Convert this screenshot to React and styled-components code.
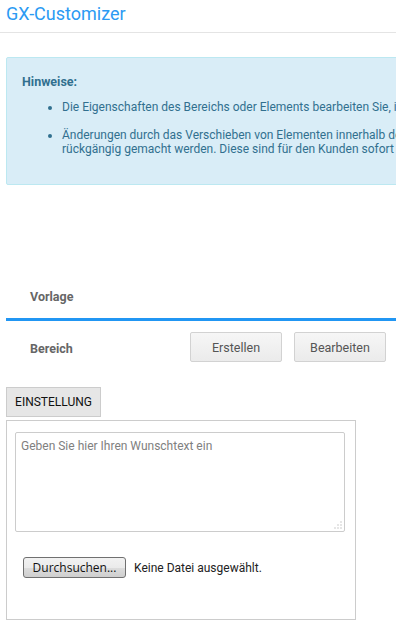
import React from 'react';
import styled, { createGlobalStyle } from 'styled-components';

const GlobalStyle = createGlobalStyle`
  html, body {
    margin: 0;
    padding: 0;
    background: #ffffff;
    overflow-x: hidden;
    font-family: Roboto, "Liberation Sans", Arial, sans-serif;
  }
`;

const hints = [
  ['Die Eigenschaften des Bereichs oder Elements bearbeiten Sie, indem Sie auf das jeweilige Stift-Symbol klicken.'],
  [
    'Änderungen durch das Verschieben von Elementen innerhalb des Customizers können nicht mehr',
    'rückgängig gemacht werden. Diese sind für den Kunden sofort sichtbar.',
  ],
];

const Grip = () => (
  <GripIcon width="8" height="8" viewBox="0 0 8 8">
    {[[7, 1], [7, 4], [7, 7], [4, 4], [4, 7], [1, 7]].map(([x, y], i) => (
      <rect key={i} x={x - 0.5} y={y - 0.5} width="1" height="1" fill="#9a9a9a" />
    ))}
  </GripIcon>
);

const App = () => {
  return (
    <>
      <GlobalStyle />
      <Page>
        <Header>
          <Title>GX-Customizer</Title>
        </Header>
        <Content>
          <InfoBox>
            <InfoTitle>Hinweise:</InfoTitle>
            <HintList>
              {hints.map((lines, i) => (
                <HintItem key={i}>
                  {lines.map((line, j) => (
                    <React.Fragment key={j}>
                      {j > 0 && <br />}
                      {line}
                    </React.Fragment>
                  ))}
                </HintItem>
              ))}
            </HintList>
          </InfoBox>

          <SettingsTable>
            <Row $height={43}>
              <Label>Vorlage</Label>
            </Row>
            <ActiveLine />
            <Row $height={54}>
              <Label>Bereich</Label>
              <ButtonGroup>
                <GrayButton>Erstellen</GrayButton>
                <GrayButton>Bearbeiten</GrayButton>
              </ButtonGroup>
            </Row>
          </SettingsTable>

          <TabBar>
            <Tab>EINSTELLUNG</Tab>
          </TabBar>
          <Panel>
            <TextWrap>
              <WishText placeholder="Geben Sie hier Ihren Wunschtext ein" />
              <Grip />
            </TextWrap>
            <FileRow>
              <FileButton>Durchsuchen...</FileButton>
              <FileName>Keine Datei ausgewählt.</FileName>
            </FileRow>
          </Panel>
        </Content>
      </Page>
    </>
  );
};

const Page = styled.div`
  width: 1000px;
`;

const Header = styled.div`
  height: 32px;
  border-bottom: 1px solid #e4e4e4;
  padding: 0 6px;
  display: flex;
  align-items: center;
`;

const Title = styled.h1`
  margin: 0;
  margin-top: -6px;
  font-size: 18px;
  font-weight: 400;
  color: #2b9af3;
`;

const Content = styled.div`
  padding: 24px 6px 0;
`;

const InfoBox = styled.div`
  background: #d9edf7;
  border: 1px solid #bce8f1;
  border-radius: 2px;
  padding: 16px 15px 0;
  box-sizing: border-box;
  height: 128px;
  color: #31708f;
  font-size: 12px;
`;

const InfoTitle = styled.div`
  font-weight: 700;
  font-size: 12.5px;
  line-height: 16px;
`;

const HintList = styled.ul`
  margin: 10px 0 0;
  padding-left: 40px;
`;

const HintItem = styled.li`
  line-height: 14.5px;
  margin-bottom: 13px;
`;

const SettingsTable = styled.div`
  margin-top: 90px;
`;

const Row = styled.div`
  display: flex;
  align-items: center;
  height: ${p => p.$height}px;
`;

const Label = styled.div`
  width: 160px;
  padding-left: 24px;
  font-size: 12.5px;
  font-weight: 700;
  color: #666666;
`;

const ActiveLine = styled.div`
  height: 3px;
  background: #2196f3;
`;

const ButtonGroup = styled.div`
  display: flex;
  gap: 12px;
  margin-top: -2px;
`;

const GrayButton = styled.button`
  width: 92px;
  height: 30px;
  background: linear-gradient(#f6f6f6, #ebebeb);
  border: 1px solid #d2d2d2;
  border-radius: 2px;
  font-family: Roboto, "Liberation Sans", Arial, sans-serif;
  font-size: 12.5px;
  color: #555555;
  padding: 0;
`;

const TabBar = styled.div`
  display: flex;
  margin-top: 12px;
`;

const Tab = styled.div`
  height: 30px;
  box-sizing: border-box;
  width: 95px;
  border: 1px solid #cccccc;
  background: #e6e6e6;
  display: flex;
  align-items: center;
  justify-content: center;
  font-size: 12px;
  color: #111111;
`;

const Panel = styled.div`
  margin-top: 3px;
  width: 350px;
  height: 200px;
  box-sizing: border-box;
  border: 1px solid #cccccc;
  padding: 11px 10px 0 8px;
`;

const TextWrap = styled.div`
  position: relative;
  width: 330px;
`;

const WishText = styled.textarea`
  display: block;
  width: 330px;
  height: 100px;
  box-sizing: border-box;
  border: 1px solid #cccccc;
  border-radius: 2px;
  padding: 6px 5px;
  font-family: Roboto, "Liberation Sans", Arial, sans-serif;
  font-size: 12px;
  color: #333333;
  resize: none;

  &::placeholder {
    color: #808080;
  }
`;

const GripIcon = styled.svg`
  position: absolute;
  right: 3px;
  bottom: 3px;
`;

const FileRow = styled.div`
  display: flex;
  align-items: center;
  gap: 8px;
  margin-top: 25px;
  padding-left: 8px;
`;

const FileButton = styled.button`
  width: 103px;
  height: 21px;
  box-sizing: border-box;
  border: 1px solid #707070;
  border-radius: 3px;
  background: linear-gradient(#f2f2f2 0%, #ebebeb 50%, #dddddd 51%, #cfcfcf 100%);
  font-family: "Open Sans", "DejaVu Sans", sans-serif;
  font-size: 12px;
  color: #111111;
  padding: 0;
`;

const FileName = styled.span`
  font-size: 12px;
  color: #222222;
`;

export default App;
